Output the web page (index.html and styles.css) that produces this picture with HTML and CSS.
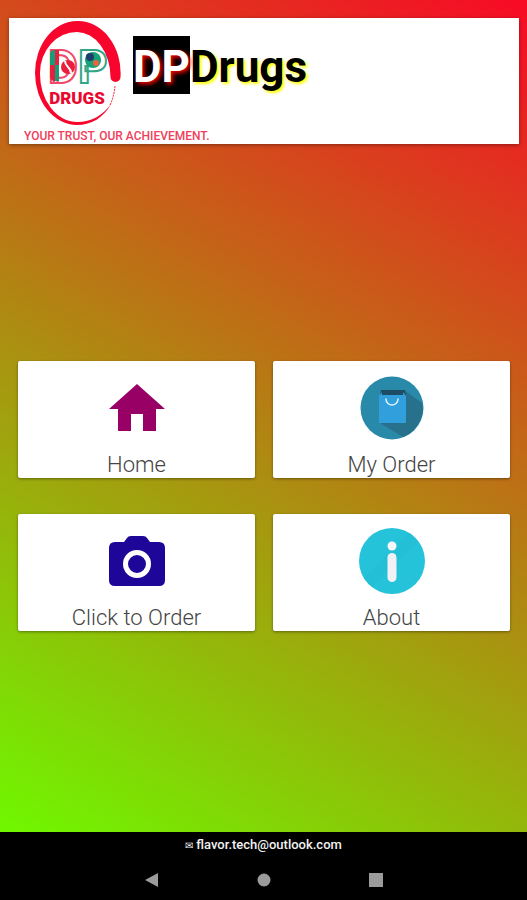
FILE: index.html
```html
<!DOCTYPE html>
<html lang="en">
<head>
<meta charset="utf-8">
<meta name="viewport" content="width=device-width, initial-scale=1">
<title>DPDrugs</title>
<link rel="stylesheet" href="styles.css">
</head>
<body>
<div class="screen">
  <header class="banner">
    <div class="brand">
      <svg class="logo" viewBox="0 0 86 104" role="img" aria-label="DP Drugs logo">
        <path fill="#f8052d" d="M85.500 56A43 52 0 0 0 42 0A42 52 0 0 0 0 52A42 52 0 0 0 42 104C57 104 69 96 76 83C68 94 57 101 42 101A37 48 0 0 1 5 52A37 41 0 0 1 42 11A34 45 0 0 1 75.500 56A5 5 0 0 0 85.500 56Z"/>
        <path fill="none" stroke="#f8052d" stroke-dasharray="2 1" d="M75 84Q79 76 80 65"/>
        <text class="initials" x="13" y="62"><tspan stroke="#f04a68">D</tspan><tspan stroke="#35a587">P</tspan></text>
        <path fill="#159c78" d="M20 29v15h-5V34q0-5 5-5zM20 44h4v16h-4z"/>
        <path fill="#e5203f" d="M20 29h4v15h-4zM15 44h5v16q-5 0-5-5z"/>
        <circle cx="33" cy="46" r="7" fill="#ec1c3c"/>
        <path fill="none" stroke="#fff" stroke-width="2" d="M30 40q0 3 3 6t3 6"/>
        <circle cx="58" cy="39" r="8" fill="#18a078"/>
        <circle cx="55" cy="36" r="4" fill="#1d3e6c"/>
        <circle cx="61" cy="42" r="3" fill="#e9643f"/>
        <text class="logo-name" x="42" y="83">DRUGS</text>
      </svg>
      <h1 class="title"><span class="title-mark">DP</span><span class="title-rest">Drugs</span></h1>
    </div>
    <p class="tagline">YOUR TRUST, OUR ACHIEVEMENT.</p>
  </header>

  <main class="menu">
    <button class="tile" type="button">
      <span class="tile-icon">
        <svg width="56" height="48" viewBox="0 0 56 48" aria-hidden="true"><path fill="#990065" d="M28 0L56 25H47V47H34V30H22V47H9V25H0Z"/></svg>
      </span>
      <span class="tile-label">Home</span>
    </button>
    <button class="tile" type="button">
      <span class="tile-icon">
        <svg width="64" height="64" viewBox="0 0 64 64" aria-hidden="true">
          <circle cx="32" cy="32" r="31.500" fill="#2889a8"/>
          <path fill="#28718d" d="M44 14L62 27Q65 38 57 50Q51 58 43 61L20 47Z"/>
          <path fill="#1d4d66" d="M21 14h24l1 6H20z"/>
          <path fill="#319fdc" d="M19 20l3-4v3h21v-3l3 4v27H19z"/>
          <path fill="none" stroke="#d8f2ff" stroke-width="1.500" stroke-linecap="round" d="M26 23a6 6 0 0 0 12 0"/>
        </svg>
      </span>
      <span class="tile-label">My Order</span>
    </button>
    <button class="tile" type="button">
      <span class="tile-icon">
        <svg width="56" height="50" viewBox="0 0 56 50" aria-hidden="true">
          <path fill="#1e0699" d="M22 0H34Q37 0 38 2L41 6H50Q56 6 56 12V44Q56 50 50 50H6Q0 50 0 44V12Q0 6 6 6H15L18 2Q19 0 22 0Z"/>
          <circle cx="28" cy="28" r="11.500" fill="none" stroke="#fff" stroke-width="5"/>
        </svg>
      </span>
      <span class="tile-label">Click to Order</span>
    </button>
    <button class="tile" type="button">
      <span class="tile-icon">
        <svg width="66" height="66" viewBox="0 0 66 66" aria-hidden="true">
          <circle cx="33" cy="33" r="33" fill="#24c3da"/>
          <path fill="#22bfd6" d="M5 50L50 5L59 13L13 59Z"/>
          <circle cx="33" cy="18" r="4.500" fill="#f7f7fa"/>
          <rect x="28.500" y="25" width="9" height="29" rx="4.500" fill="#f0f0f5"/>
        </svg>
      </span>
      <span class="tile-label">About</span>
    </button>
  </main>
</div>

<footer class="footer">
  <a class="contact" href="mailto:flavor.tech@outlook.com"><span class="envelope">✉</span> flavor.tech@outlook.com</a>
  <nav class="system-nav" aria-label="System">
    <button type="button" aria-label="Back"><svg width="14" height="14" viewBox="0 0 14 14"><path d="M13 0V14L0 7Z"/></svg></button>
    <button type="button" aria-label="Home screen"><svg width="14" height="14" viewBox="0 0 14 14"><circle cx="7" cy="7" r="6.500"/></svg></button>
    <button type="button" aria-label="Recent apps"><svg width="14" height="14" viewBox="0 0 14 14"><path d="M0 0H14V14H0Z"/></svg></button>
  </nav>
</footer>
</body>
</html>
```
FILE: styles.css
```css
* {
  box-sizing: border-box;
}

body {
  margin: 0;
  min-height: 100vh;
  display: flex;
  flex-direction: column;
  font-family: Roboto, "Liberation Sans", sans-serif;
  background: #000;
}

.screen {
  flex: 1;
  display: flex;
  flex-direction: column;
  padding: 18px 8px 0 9px;
  background: linear-gradient(30deg, #6ff800, #f80a26);
}

.banner {
  padding: 3px 15px 0;
  background: #fff;
  box-shadow: 0 1px 4px rgba(0, 0, 0, 0.4);
}

.brand {
  display: flex;
  align-items: flex-start;
  gap: 12px;
  padding-left: 11px;
}

.logo {
  width: 86px;
  height: 104px;
  margin-bottom: 3px;
}

.initials {
  font-size: 46px;
  font-weight: 700;
  fill: #fff;
  stroke-width: 2px;
}

.logo-name {
  font-size: 17px;
  font-weight: 900;
  fill: #e9082f;
  text-anchor: middle;
}

.title {
  display: flex;
  margin: 15px 0 0;
  font-size: 44px;
  line-height: 54px;
  font-weight: 700;
}

.title span {
  padding-top: 4px;
}

.title-mark {
  color: #fff;
  background: #000;
  text-shadow: 2px 2px 4px #f00;
}

.title-rest {
  color: #000;
  text-shadow: 2px 2px 3px #ff0;
}

.tagline {
  margin: 0;
  font-size: 12px;
  line-height: 16px;
  font-weight: 500;
  color: #f0405a;
}

.menu {
  flex: 1;
  display: grid;
  grid-template-columns: 1fr 1fr;
  align-content: center;
  gap: 36px 18px;
  padding: 16px 9px 0;
}

.tile {
  display: flex;
  flex-direction: column;
  padding: 0;
  border: 0;
  border-radius: 2px;
  background: #fff;
  box-shadow: 0 1px 3px rgba(0, 0, 0, 0.4);
  font: inherit;
  cursor: pointer;
}

.tile-icon {
  width: 100%;
  height: 91px;
  display: flex;
  align-items: center;
  justify-content: center;
  padding-top: 2px;
}

.tile-label {
  width: 100%;
  text-align: center;
  font-size: 22px;
  line-height: 26px;
  font-weight: 300;
  color: #444;
}

.footer {
  display: flex;
  flex-direction: column;
  align-items: center;
  background: #000;
}

.contact {
  padding-top: 3px;
  font-size: 13px;
  line-height: 20px;
  font-weight: 500;
  color: #f2f2f2;
  text-decoration: none;
}

.envelope {
  font-size: 10px;
  line-height: 10px;
}

.system-nav {
  display: flex;
  gap: 72px;
  padding-top: 5px;
}

.system-nav button {
  width: 40px;
  height: 40px;
  display: grid;
  place-items: center;
  padding: 0;
  border: 0;
  background: none;
  fill: #9b9b9b;
}
```
